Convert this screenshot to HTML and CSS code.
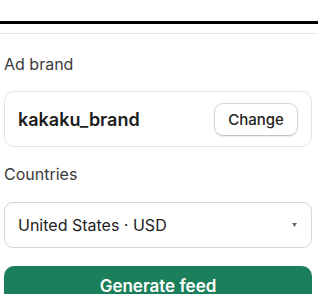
FILE: index.html
```html
<!DOCTYPE html>
<html>
<head>
<meta charset="utf-8">
<link rel="stylesheet" href="styles.css">
</head>
<body>
<div class="topbar"></div>
<div class="divider"></div>
<main class="content">
  <div class="label label-brand">Ad brand</div>
  <div class="card">
    <span class="brand">kakaku_brand</span>
    <button class="change">Change</button>
  </div>
  <div class="label label-countries">Countries</div>
  <div class="select">
    <span class="select-text">United States · USD</span>
    <svg class="caret" width="5" height="4" viewBox="0 0 5 4"><path d="M0 0h5L2.5 4z" fill="#666"/></svg>
  </div>
  <button class="generate">Generate feed</button>
</main>
</body>
</html>
```
FILE: styles.css
```css
* { box-sizing: border-box; }
html, body { margin: 0; padding: 0; background: #fff; }
body {
  width: 318px;
  height: 294px;
  overflow: hidden;
  font-family: Inter, "Noto Sans", sans-serif;
  color: #222;
}
.topbar {
  height: 24px;
  border-bottom: 3px solid #000;
}
.divider {
  margin-top: 9px;
  height: 1px;
  background: #e8e8e8;
}
.content {
  padding: 0 6px 0 4px;
  display: flex;
  flex-direction: column;
}
.label {
  font-size: 16px;
  line-height: 20px;
  color: #3a3a3a;
}
.label-brand { margin-top: 20px; }
.card {
  margin-top: 17px;
  height: 56px;
  border: 1px solid #e4e4e4;
  border-radius: 10px;
  display: flex;
  align-items: center;
  justify-content: space-between;
  padding: 0 13px;
}
.brand {
  font-size: 18px;
  font-weight: 600;
  color: #1c1c1c;
}
.change {
  width: 84px;
  height: 33px;
  border: 1px solid #d4d4d4;
  border-bottom-color: #c4c4c4;
  border-radius: 9px;
  background: #fff;
  font-family: inherit;
  font-size: 15px;
  font-weight: 500;
  color: #222;
  box-shadow: 0 1px 1px rgba(0,0,0,0.08);
  padding: 0;
}
.label-countries { margin-top: 17px; }
.select {
  margin-top: 18px;
  height: 46px;
  border: 1px solid #d6d6d6;
  border-radius: 9px;
  display: flex;
  align-items: center;
  justify-content: space-between;
  padding: 0 14px 0 13px;
}
.select-text {
  font-size: 16px;
  color: #222;
}
.caret { display: block; }
.generate {
  margin-top: 18px;
  height: 28px;
  border: none;
  border-radius: 10px 10px 0 0;
  background: #1b7f5b;
  color: #fff;
  font-family: inherit;
  font-size: 17px;
  font-weight: 600;
  line-height: 20px;
  padding: 10px 0 0;
  overflow: visible;
  display: flex;
  justify-content: center;
  align-items: flex-start;
}
```
